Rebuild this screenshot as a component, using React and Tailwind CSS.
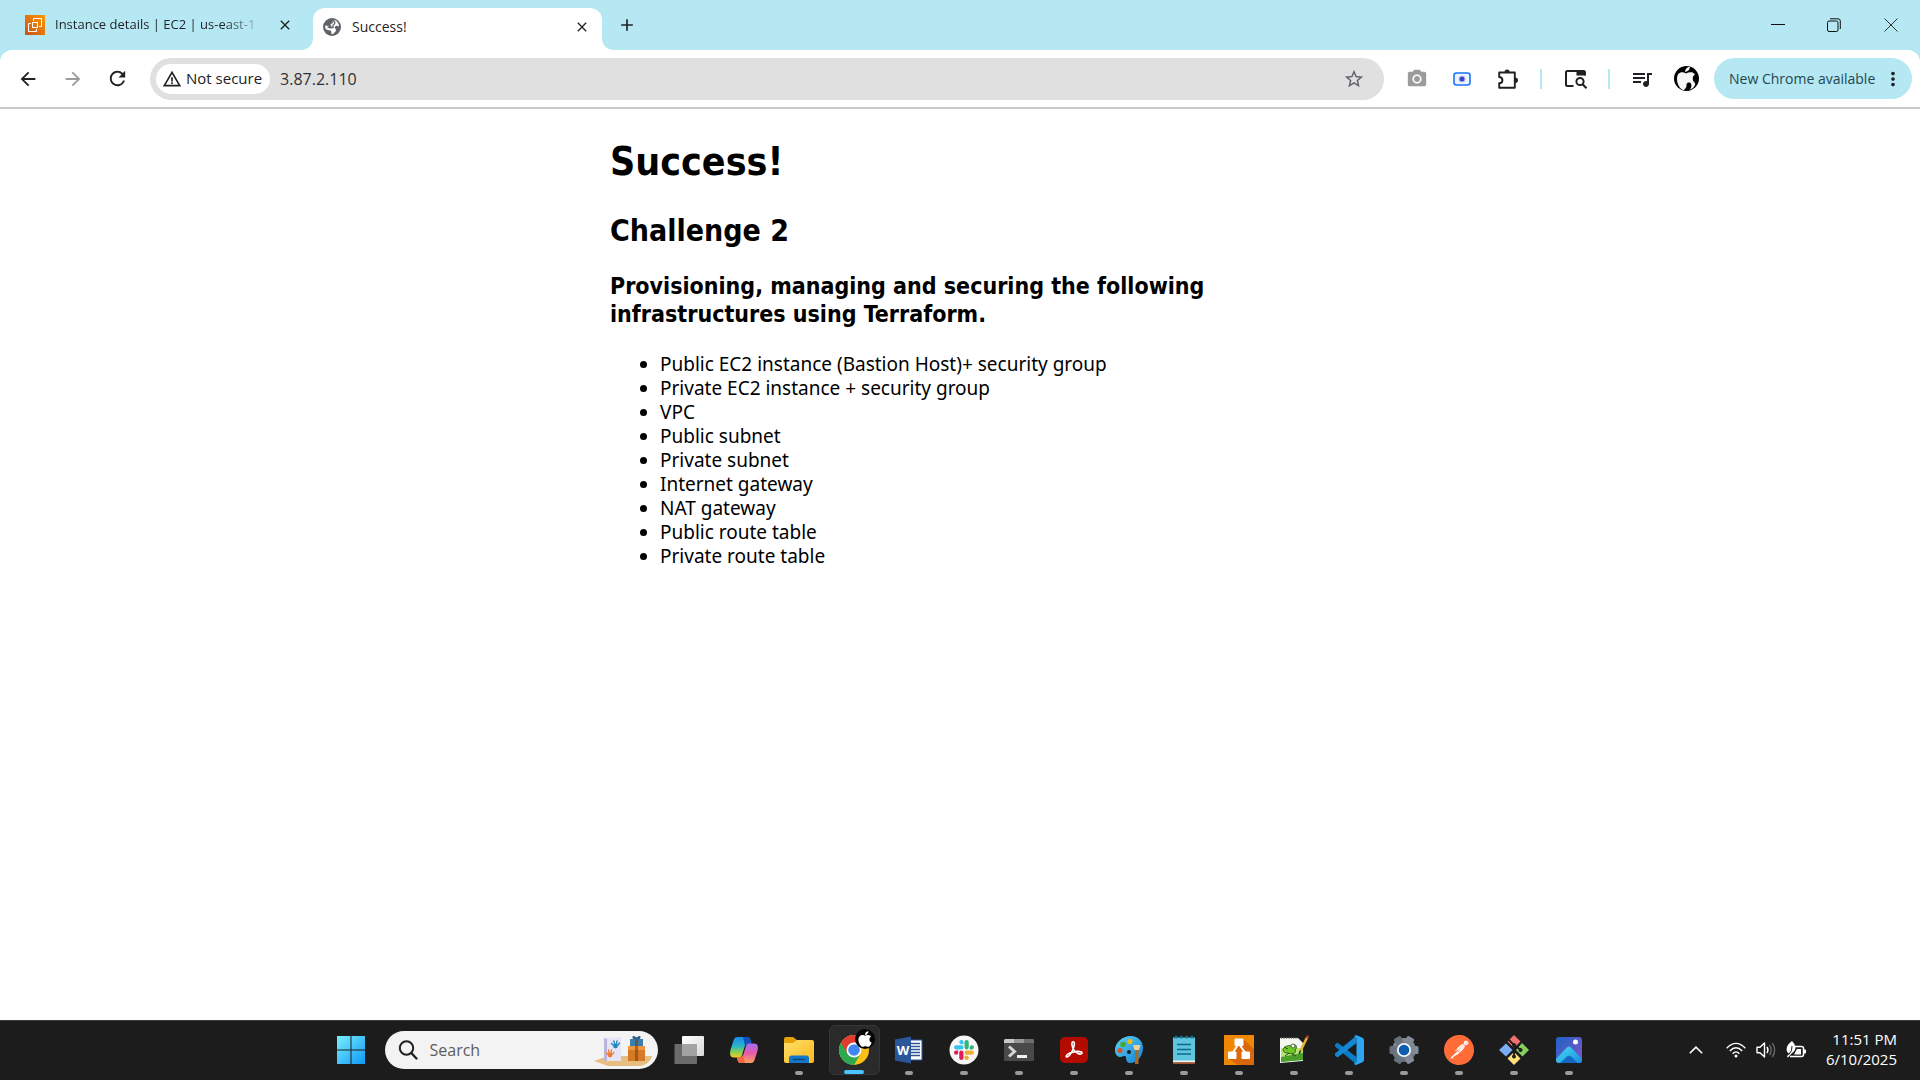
import React from "react";
import { FaApple } from "react-icons/fa";
import { SiPostman } from "react-icons/si";
import {
  MdAdd,
  MdArrowBack,
  MdArrowForward,
  MdClose,
  MdMoreVert,
  MdQueueMusic,
  MdRefresh,
  MdStarBorder,
  MdPhotoCamera,
  MdWarningAmber,
} from "react-icons/md";

const UI_FONT = "font-['Open_Sans','Noto_Sans',sans-serif]";

const resources = [
  "Public EC2 instance (Bastion Host)+ security group",
  "Private EC2 instance + security group",
  "VPC",
  "Public subnet",
  "Private subnet",
  "Internet gateway",
  "NAT gateway",
  "Public route table",
  "Private route table",
];

function Svg({ children, className = "size-[30px]" }) {
  return (
    <svg viewBox="0 0 30 30" className={`${className} overflow-visible`} aria-hidden="true">
      {children}
    </svg>
  );
}

/* ---------- Tab strip ---------- */

function Ec2Icon() {
  return (
    <svg viewBox="0 0 20 20" className="size-5 shrink-0" aria-hidden="true">
      <defs>
        <linearGradient id="ec2" x1="0" y1="1" x2="1" y2="0">
          <stop offset="0" stopColor="#c8511b" />
          <stop offset="1" stopColor="#f90" />
        </linearGradient>
      </defs>
      <rect width="20" height="20" fill="url(#ec2)" />
      <g fill="none" stroke="#fff" strokeWidth="1">
        <rect x="7.5" y="7.5" width="5" height="5" />
        <path d="M8.500 6V3.500H16.500V11.500H14" />
        <path d="M6 8.500H3.500V16.500H11.500V14" />
      </g>
    </svg>
  );
}

function GlobeIcon() {
  return (
    <svg viewBox="0 0 18 18" className="size-[18px] shrink-0" aria-hidden="true">
      <circle cx="9" cy="9" r="9" fill="#5f6368" />
      <path
        d="M2 8C2.500 7 4 7.500 5 8L7 9.500L8.500 9C8.500 7.500 7 7 7.500 6C8.500 5.500 10 5.500 10 4.500C10 3.500 9 3.500 9.500 2.500L11.500 2C14.500 3 16 6 16 8.500C15 8 14 7.500 13 8C11.500 8.500 11.500 10 12.500 11C13.500 11.500 13 13 12 14C11 15.500 9.500 16.500 8.500 16C8 15 9 13.500 7.500 12.500C6 12 3.500 12 2.500 10.500Z"
        fill="#fff"
      />
      <path d="M9.500 2.500C12 3 12.500 5 11 6.500C9.500 7 9.500 8 10.500 9C8.500 10.500 6 9.500 4.500 9" stroke="#5f6368" strokeWidth="1.300" fill="none" />
    </svg>
  );
}

function TabStrip() {
  return (
    <header className="flex h-[50px] items-stretch bg-[#b5e8f3] text-[#1f2326]">
      <div className="flex w-[301px] items-center pl-[25px]">
        <Ec2Icon />
        <span className="ml-[10px] w-[210px] text-[13px] whitespace-nowrap [mask-image:linear-gradient(to_right,black_80%,transparent)]">
          Instance details | EC2 | us-east-1
        </span>
        <button aria-label="Close Instance details tab" className="ml-3">
          <MdClose className="size-4" />
        </button>
      </div>
      <div className="flex items-end pt-2">
        <svg viewBox="0 0 12 12" className="size-3" aria-hidden="true">
          <path d="M12 0V12H0C7 12 12 7 12 0Z" fill="#fff" />
        </svg>
        <div className="flex h-full w-[289px] items-center rounded-t-xl bg-white pr-3 pb-[17px] pl-2.5 pt-3">
          <GlobeIcon />
          <span className="ml-[11px] flex-1 text-sm">Success!</span>
          <button aria-label="Close Success tab">
            <MdClose className="size-4" />
          </button>
        </div>
        <svg viewBox="0 0 12 12" className="size-3" aria-hidden="true">
          <path d="M0 0V12H12C5 12 0 7 0 0Z" fill="#fff" />
        </svg>
      </div>
      <button aria-label="New tab" className="ml-[3px]">
        <MdAdd className="size-5" />
      </button>
      <div className="ml-auto flex">
        <button aria-label="Minimize" className="flex w-14 items-center justify-center">
          <svg viewBox="0 0 14 14" className="size-3.5" aria-hidden="true">
            <path d="M0 6.500H14" stroke="#111" />
          </svg>
        </button>
        <button aria-label="Restore" className="flex w-14 items-center justify-center">
          <svg viewBox="0 0 14 14" className="size-3.5" fill="none" stroke="#111" aria-hidden="true">
            <rect x="0.500" y="3" width="10.500" height="10.500" rx="1.500" />
            <path d="M3 .8H11Q13.300 .8 13.300 3V11" />
          </svg>
        </button>
        <button aria-label="Close window" className="flex w-[58px] items-center justify-center">
          <svg viewBox="0 0 14 14" className="size-3.5" stroke="#333" aria-hidden="true">
            <path d="M.5 .5L13.500 13.500M13.500 .5L.5 13.500" />
          </svg>
        </button>
      </div>
    </header>
  );
}

/* ---------- Toolbar ---------- */

function ScreenshotIcon() {
  return (
    <svg viewBox="0 0 18 14" className="h-3.5 w-[18px]" aria-hidden="true">
      <rect x="1" y="1" width="16" height="12" rx="2.500" fill="#eef5ff" stroke="#1a73f8" strokeWidth="1.600" />
      <circle cx="9" cy="7" r="3.600" fill="#c3cbf7" />
      <circle cx="9" cy="7" r="2.500" fill="#3a46c8" />
    </svg>
  );
}

function PuzzleIcon() {
  return (
    <svg viewBox="0 0 22 22" className="size-[22px]" aria-hidden="true">
      <path
        d="M2.200 4.500H17.800V19.800H2.200V15.300C6.500 15 6.500 9.300 2.200 9Z"
        fill="none"
        stroke="#202124"
        strokeWidth="1.900"
        strokeLinejoin="round"
      />
      <path d="M7.500 4.500a2.600 2.900 0 0 1 5.200 0ZM18 9.500a3 2.800 0 0 1 0 5.600Z" fill="#202124" />
    </svg>
  );
}

function TabSearchIcon() {
  return (
    <svg viewBox="0 0 22 20" className="h-5 w-[22px]" fill="none" stroke="#202124" strokeWidth="2" aria-hidden="true">
      <path d="M8.500 17H2.500Q1 17 1 15.500V3.500Q1 2 2.500 2H18.500Q20 2 20 3.500V6.500" />
      <path d="M11.500 2H20V6.500H11.500Z" fill="#202124" stroke="none" />
      <circle cx="15" cy="12.500" r="3.600" />
      <path d="M17.600 15.200L21.500 19.200" />
    </svg>
  );
}

function Avatar() {
  return (
    <span className="flex size-[25px] items-center justify-center overflow-hidden rounded-full bg-black">
      <svg viewBox="0 0 25 25" className="size-[25px]" aria-hidden="true">
        <path
          d="M12 7.500C8 5 3 6 3 13C3 18 6 23 9 24C11 24.500 11 22 12.500 21C12 18 13 16 15.500 16.500C18 17 18 21 16 23.500C19 23 22 19 21 17C18 15 18 10 21 8.500C19 5.500 15 6 12 7.500Z"
          fill="#f6f6f6"
        />
        <path d="M11 6C11 3 13 1 16 .5C16 3.500 14 5.500 11 6Z" fill="#f6f6f6" />
      </svg>
    </span>
  );
}

function Toolbar() {
  return (
    <div className="bg-[#b5e8f3]">
      <nav
        aria-label="Browser toolbar"
        className="flex h-[59px] items-center rounded-t-xl border-b-2 border-[#c8c8c8] bg-white pr-2 pl-[17px] text-[#202124]"
      >
        <button aria-label="Back">
          <MdArrowBack className="size-[22px]" />
        </button>
        <button aria-label="Forward" className="ml-[23px] text-[#9b9b9b]">
          <MdArrowForward className="size-[22px]" />
        </button>
        <button aria-label="Reload" className="ml-[22px]">
          <MdRefresh className="size-[23px]" />
        </button>
        <div className="ml-[21px] flex h-[42px] flex-1 items-center rounded-full bg-[#e0e0e0] pr-[19px] pl-1.5">
          <button className="flex h-[30px] items-center gap-1 rounded-full bg-white pr-2 pl-1.5 text-[15px] font-medium">
            <MdWarningAmber className="size-5" />
            Not secure
          </button>
          <input
            aria-label="Address"
            defaultValue="3.87.2.110"
            className="ml-2.5 min-w-0 flex-1 bg-transparent text-base text-[#303134] outline-none"
          />
          <button aria-label="Bookmark this page">
            <MdStarBorder className="size-[22px] text-[#5f6368]" />
          </button>
        </div>
        <div className="ml-[22px] flex items-center">
          <button aria-label="Camera extension">
            <MdPhotoCamera className="size-[22px] text-[#9b9b9b]" />
          </button>
          <button aria-label="Screenshot extension" className="ml-[25px]">
            <ScreenshotIcon />
          </button>
          <button aria-label="Extensions" className="ml-[26px]">
            <PuzzleIcon />
          </button>
          <span className="ml-[21px] h-5 w-0.5 bg-[#b5e8f3]" />
          <button aria-label="Search tabs" className="ml-[23px]">
            <TabSearchIcon />
          </button>
          <span className="ml-[21px] h-5 w-0.5 bg-[#b5e8f3]" />
          <button aria-label="Media controls" className="ml-5">
            <MdQueueMusic className="size-6" />
          </button>
          <button aria-label="Profile" className="ml-5">
            <Avatar />
          </button>
          <button className="ml-[15px] flex h-[41px] w-[198px] items-center justify-between rounded-full bg-[#b5e8f3] pr-2 pl-[15px] text-sm whitespace-nowrap text-[#24474f]">
            New Chrome available
            <MdMoreVert className="size-[22px] text-[#202124]" />
          </button>
        </div>
      </nav>
    </div>
  );
}

/* ---------- Page ---------- */

function Page() {
  return (
    <main className="flex-1 bg-white font-['DejaVu_Sans_Condensed','DejaVu_Sans',sans-serif] text-black">
      <article className="mx-auto max-w-[700px] pt-[29px]">
        <h1 className="text-[39px] leading-[48px] font-bold">Success!</h1>
        <h2 className="mt-[27px] text-3xl leading-9 font-bold">Challenge 2</h2>
        <h3 className="mt-[23px] text-[23px] leading-7 font-bold">
          Provisioning, managing and securing the following infrastructures using Terraform.
        </h3>
        <ul className="mt-6 list-disc pl-[50px] font-['Noto_Sans',sans-serif] text-[19px] leading-6">
          {resources.map((r) => (
            <li key={r}>{r}</li>
          ))}
        </ul>
      </article>
    </main>
  );
}

/* ---------- Taskbar icons ---------- */

function StartIcon() {
  return (
    <Svg>
      <defs>
        <linearGradient id="start" x1="0" y1="0" x2="30" y2="30" gradientUnits="userSpaceOnUse">
          <stop offset="0" stopColor="#7df3ff" />
          <stop offset="1" stopColor="#0a94f5" />
        </linearGradient>
      </defs>
      <path d="M1 1H14.500V14.500H1ZM15.500 1H29V14.500H15.500ZM1 15.500H14.500V29H1ZM15.500 15.500H29V29H15.500Z" fill="url(#start)" />
    </Svg>
  );
}

function TaskViewIcon() {
  return (
    <Svg>
      <defs>
        <linearGradient id="tv" x1="0" y1="0" x2="1" y2="1">
          <stop offset="0" stopColor="#fff" />
          <stop offset="1" stopColor="#d8d8d8" />
        </linearGradient>
      </defs>
      <rect x="8" y="1" width="22" height="20" rx="1" fill="url(#tv)" />
      <path d="M.5 10Q.5 9 1.500 9H23V28Q23 29 22 29H1.500Q.5 29 .5 28Z" fill="#6b6b6b" />
      <path d="M8 9H23V21H8Z" fill="#a3a3a3" />
    </Svg>
  );
}

function CopilotIcon() {
  return (
    <Svg>
      <defs>
        <linearGradient id="cp1" x1="0" y1="0" x2="0" y2="1">
          <stop offset="0" stopColor="#1a8af0" />
          <stop offset=".45" stopColor="#29b6c8" />
          <stop offset=".75" stopColor="#8fd04a" />
          <stop offset="1" stopColor="#f3cd25" />
        </linearGradient>
        <linearGradient id="cp2" x1="0" y1="0" x2="0" y2="1">
          <stop offset="0" stopColor="#a66bf2" />
          <stop offset=".5" stopColor="#e85aa8" />
          <stop offset="1" stopColor="#ffa35c" />
        </linearGradient>
      </defs>
      <path d="M8 2H18C20 2 21 3 21.500 5L22.500 9H19C17 9 16 10 15.500 12L13 20C12.500 21.500 11.500 22.500 10 22.500H5C1 22.500 .5 19 1.500 15L4 7C5 3.500 6 2 8 2Z" fill="url(#cp1)" />
      <path d="M14 2H18C20 2 21 3 21.500 5L22.500 9H19C17.500 9 16.500 9.500 16 11Z" fill="#1550bf" />
      <path d="M22 28H12C10 28 9 27 8.500 25L7.700 22H11C13 22 14 21 14.500 19L17 11C17.500 9.500 18.500 8.500 20 8.500H25C29 8.500 29.500 12 28.500 16L26 23.500C25 27 24 28 22 28Z" fill="url(#cp2)" />
      <path d="M16 28H12C10 28 9 27 8.500 25L7.700 22H11C12.500 22 13.500 21.500 14 20Z" fill="#f06a45" />
    </Svg>
  );
}

function ExplorerIcon() {
  return (
    <Svg>
      <defs>
        <linearGradient id="fo" x1="0" y1="0" x2="1" y2="1">
          <stop offset="0" stopColor="#ffdf6b" />
          <stop offset="1" stopColor="#fdb91a" />
        </linearGradient>
      </defs>
      <path d="M0 4Q0 2 2 2H9L13 5H20V12H0Z" fill="#e5a10b" />
      <path d="M0 8H9L13 5H28Q30 5 30 7V26Q30 28 28 28H2Q0 28 0 26Z" fill="url(#fo)" />
      <path d="M5 28V23Q5 20.500 7.500 20.500H22.500Q25 20.500 25 23V28Z" fill="#1477c9" />
      <path d="M9 24.500H21" stroke="#0a4678" strokeWidth="1.500" />
    </Svg>
  );
}

function ChromeIcon() {
  return (
    <Svg>
      <circle cx="15" cy="15" r="15" fill="#fbbf16" />
      <path d="M15 15L2 7.500A15 15 0 0 0 15 30L21.500 18.800Z" fill="#2da94f" />
      <path d="M15 15V7.500H28A15 15 0 0 0 2 7.500L8.500 18.800Z" fill="#e33b2e" />
      <circle cx="15" cy="15" r="7.500" fill="#fff" />
      <circle cx="15" cy="15" r="5.800" fill="#4285f4" />
      <circle cx="26" cy="4" r="10" fill="#050505" />
      <FaApple x="17" y="-5" size={18} color="#fff" />
    </Svg>
  );
}

function WordIcon() {
  return (
    <Svg>
      <rect x="14" y="5" width="14" height="20" fill="#fff" stroke="#2b579a" />
      <path d="M17 8.500H26M17 11.500H26M17 14.500H26M17 17.500H26M17 20.500H26" stroke="#2b579a" strokeWidth="1.300" />
      <path d="M1 4.500L17 1.500V28.500L1 25.500Z" fill="#2b579a" />
      <text x="9" y="20" fill="#fff" fontSize="13" fontWeight="700" textAnchor="middle">
        W
      </text>
    </Svg>
  );
}

function SlackIcon() {
  return (
    <Svg>
      <circle cx="15" cy="15" r="14.500" fill="#f7f5f5" />
      <g transform="translate(5 5) scale(.833)">
        <path fill="#e01e5a" d="M5.042 15.165a2.528 2.528 0 0 1-2.520 2.523A2.528 2.528 0 0 1 0 15.165a2.527 2.527 0 0 1 2.522-2.520h2.520zM6.313 15.165a2.527 2.527 0 0 1 2.521-2.520 2.527 2.527 0 0 1 2.521 2.520v6.313A2.528 2.528 0 0 1 8.834 24a2.528 2.528 0 0 1-2.521-2.522z" />
        <path fill="#36c5f0" d="M8.834 5.042a2.528 2.528 0 0 1-2.521-2.520A2.528 2.528 0 0 1 8.834 0a2.528 2.528 0 0 1 2.521 2.522v2.520zM8.834 6.313a2.528 2.528 0 0 1 2.521 2.521 2.528 2.528 0 0 1-2.521 2.521H2.522A2.528 2.528 0 0 1 0 8.834a2.528 2.528 0 0 1 2.522-2.521z" />
        <path fill="#2eb67d" d="M18.956 8.834a2.528 2.528 0 0 1 2.522-2.521A2.528 2.528 0 0 1 24 8.834a2.528 2.528 0 0 1-2.522 2.521h-2.522zM17.688 8.834a2.528 2.528 0 0 1-2.523 2.521 2.527 2.527 0 0 1-2.520-2.521V2.522A2.527 2.527 0 0 1 15.165 0a2.528 2.528 0 0 1 2.523 2.522z" />
        <path fill="#ecb22e" d="M15.165 18.956a2.528 2.528 0 0 1 2.523 2.522A2.528 2.528 0 0 1 15.165 24a2.527 2.527 0 0 1-2.520-2.522v-2.522zM15.165 17.688a2.527 2.527 0 0 1-2.520-2.523 2.526 2.526 0 0 1 2.520-2.520h6.313A2.527 2.527 0 0 1 24 15.165a2.528 2.528 0 0 1-2.522 2.523z" />
      </g>
    </Svg>
  );
}

function TerminalIcon() {
  return (
    <Svg>
      <rect x="0" y="4" width="30" height="22" rx="1.500" fill="#48494b" />
      <path d="M0 8V5.500Q0 4 1.500 4H10V8Z" fill="#c9c9c9" />
      <path d="M10 4H20V8H10Z" fill="#989898" />
      <path d="M20 4H28.500Q30 4 30 5.500V8H20Z" fill="#6e6e6e" />
      <path d="M5 11.500L10.500 16.500L5 21.500" fill="none" stroke="#d6d6d6" strokeWidth="3" />
      <path d="M13 21.500H23" stroke="#f2f2f2" strokeWidth="3" />
    </Svg>
  );
}

function AcrobatIcon() {
  return (
    <Svg>
      <rect x="1" y="2" width="28" height="26" rx="5" fill="#b30b00" />
      <path
        d="M13.500 7C15.500 6 16 9 14.500 13C13 17 10 21.500 8 22C6.500 22 7 19.500 11 18C15 16.500 20 16 22.500 17C24 18 22 20 19 18.500C16 17 13.500 13.500 13 10C12.800 8.500 12.900 7.400 13.500 7Z"
        fill="none"
        stroke="#fff"
        strokeWidth="1.600"
      />
    </Svg>
  );
}

function PaintIcon() {
  return (
    <Svg>
      <defs>
        <linearGradient id="pt" x1="0" y1="0" x2="1" y2="1">
          <stop offset="0" stopColor="#5ed4f7" />
          <stop offset="1" stopColor="#1080d0" />
        </linearGradient>
      </defs>
      <path d="M17 1C8 1 1 8 1 15C1 19 3 22 6 22C8 22 9 20.500 11 21C13 22 11 25 14 27.500C19 30 29 24 29 13C29 6 24 1 17 1Z" fill="url(#pt)" />
      <circle cx="9" cy="9.500" r="2.800" fill="#4ba82e" />
      <circle cx="16" cy="6.500" r="2.600" fill="#f4b813" />
      <circle cx="6" cy="15.500" r="2.600" fill="#d8542a" />
      <circle cx="15" cy="17" r="2" fill="#1c1c1c" />
      <path d="M21 14H24.500V29H21Z" fill="#a8682a" />
      <path d="M19 10H26.500L25 15H20.500Z" fill="#f0cf9a" />
    </Svg>
  );
}

function NotepadIcon() {
  return (
    <Svg>
      <path d="M4 2.500H26V27H4Z" fill="#5fc4de" />
      <path d="M4 25.500H26V27.500H4Z" fill="#f5f5f5" />
      <path d="M4 27.500H26V29H4Z" fill="#a4532b" />
      <path d="M8 9.500H22M8 14.500H22M8 19H22" stroke="#0d6a88" strokeWidth="1.700" />
      <g fill="#12718d">
        <circle cx="7" cy="2" r="1.600" />
        <circle cx="12.300" cy="2" r="1.600" />
        <circle cx="17.600" cy="2" r="1.600" />
        <circle cx="23" cy="2" r="1.600" />
      </g>
    </Svg>
  );
}

function DrawioIcon() {
  return (
    <Svg>
      <path d="M0 0H30V30H0Z" fill="#f08705" />
      <path d="M19 4L30 14V30H14L4 23.500L14 11Z" fill="#d9680d" />
      <path d="M14.500 9L8 19M15 9L22 19" stroke="#fff" strokeWidth="2" />
      <rect x="10.500" y="3.500" width="9" height="7.500" rx="1" fill="#fff" />
      <rect x="4" y="16.500" width="8.500" height="7.500" rx="1" fill="#fff" />
      <rect x="17.500" y="16.500" width="8.500" height="7.500" rx="1" fill="#fff" />
    </Svg>
  );
}

function NotepadPlusIcon() {
  return (
    <Svg>
      <path d="M1 3H19L24 8V26L1 28Z" fill="#f3f5ee" />
      <path d="M2 13H24V25L2 27Z" fill="#b5e374" />
      <path d="M2 22L24 18V25L2 27Z" fill="#4a9e2a" />
      <path d="M2 3H19" stroke="#666" strokeWidth="1.500" strokeDasharray="1.200 1.200" />
      <path d="M4 15C5 11 9 10 13 11C17 7 19 13 16 15C18 18 13 20 9 18C6 18 4 17 4 15Z" fill="#70c72c" stroke="#254d12" strokeWidth=".8" />
      <circle cx="14" cy="11" r="2" fill="#fff" stroke="#254d12" strokeWidth=".8" />
      <path d="M6 21L10 18M13 19L17 21M5 12L9 14" stroke="#254d12" strokeWidth="1" />
      <path d="M21 17L28.500 1.500" stroke="#e8b02b" strokeWidth="2.600" />
      <path d="M27.700 3L29 .5" stroke="#a63a2a" strokeWidth="2.600" />
      <path d="M20.200 19L21.500 15.500" stroke="#333" strokeWidth="1.500" />
    </Svg>
  );
}

function VsCodeIcon() {
  return (
    <Svg>
      <path d="M1 9.500L3.500 7.500L22.500 22V29.500L1 11.500Z" fill="#0a7bc4" />
      <path d="M1 20.500L3.500 22.500L22.500 8V.5L1 18.500Z" fill="#1287d4" />
      <path d="M22 0L28.500 2.800Q30 3.500 30 5V25Q30 26.500 28.500 27.200L22 30C20.800 30 20 29 20.500 28L22.500 27V3L20.500 2Q20.500 .5 22 0Z" fill="#2aa6f2" />
    </Svg>
  );
}

function SettingsIcon() {
  return (
    <Svg>
      <defs>
        <linearGradient id="gear" x1="0" y1="0" x2="0" y2="1">
          <stop offset="0" stopColor="#87909a" />
          <stop offset="1" stopColor="#646e78" />
        </linearGradient>
      </defs>
      <g fill="url(#gear)">
        <circle cx="15" cy="15" r="12" />
        <rect x="11" y="0.500" width="8" height="29" rx="1.500" transform="rotate(30 15 15)" />
        <rect x="11" y="0.500" width="8" height="29" rx="1.500" transform="rotate(90 15 15)" />
        <rect x="11" y="0.500" width="8" height="29" rx="1.500" transform="rotate(150 15 15)" />
      </g>
      <circle cx="15" cy="15" r="6.200" fill="#0d5cb0" stroke="#f1f3f5" strokeWidth="1.800" />
    </Svg>
  );
}

function PostmanIcon() {
  return (
    <Svg>
      <circle cx="15" cy="15" r="14" fill="#fff" />
      <SiPostman size={30} color="#ff6c37" />
    </Svg>
  );
}

function GitIcon() {
  return (
    <Svg>
      <path d="M15 0L21.500 6.500L15 13L8.500 6.500Z" fill="#f0716f" />
      <path d="M23 8L30 15L23.500 21.500L17 15Z" fill="#86cf5c" />
      <path d="M7 8.500L13.500 15L7 21.500L0 15Z" fill="#7caef5" />
      <path d="M15 17L21.500 23.500L15 30L8.500 23.500Z" fill="#ffe07a" />
      <path d="M9.500 4.500L15 10V22M15 10L22 15" fill="none" stroke="#1c1c1c" strokeWidth="1.800" />
      <circle cx="15" cy="10" r="2" fill="#1c1c1c" />
      <circle cx="21.500" cy="15" r="2" fill="#1c1c1c" />
      <circle cx="15" cy="21.500" r="2" fill="#1c1c1c" />
    </Svg>
  );
}

function PhotosIcon() {
  return (
    <Svg>
      <defs>
        <linearGradient id="ph1" x1="0" y1="0" x2="1" y2="1">
          <stop offset="0" stopColor="#1c63c8" />
          <stop offset="1" stopColor="#8654c4" />
        </linearGradient>
        <linearGradient id="ph2" x1="0" y1="0" x2="1" y2="1">
          <stop offset="0" stopColor="#46e0f5" />
          <stop offset="1" stopColor="#1583dc" />
        </linearGradient>
        <clipPath id="phc">
          <rect x="2" y="2" width="26" height="26" rx="3" />
        </clipPath>
      </defs>
      <g clipPath="url(#phc)">
        <rect x="2" y="2" width="26" height="26" fill="url(#ph1)" />
        <path d="M2 24L13 12.500Q15 10.500 17 12.500L30 26V30H2Z" fill="url(#ph2)" />
        <path d="M4 30L13 21.500Q15 20 17 21.500L26 30Z" fill="#1668c0" />
      </g>
      <circle cx="21.500" cy="7" r="2.500" fill="#fff" />
    </Svg>
  );
}

function SearchArt() {
  return (
    <svg viewBox="0 0 60 36" className="h-9 w-[60px]" aria-hidden="true">
      <path d="M0 29L14 24H58C57 29 52 33 46 34H14Z" fill="#e8bd80" />
      <path d="M10 6L27 5V29H10Z" fill="#e4e5f5" />
      <path d="M10 6L13 7V29H10Z" fill="#b9b6dd" />
      <g fill="none" strokeLinecap="round">
        <circle cx="21.500" cy="14" r="2.400" fill="#2585b8" />
        <path d="M19 13L17.500 11.500M20.500 11.500L19.800 9M22.500 11.500L23 9M24 13L25.500 11" stroke="#2585b8" strokeWidth="1.300" />
        <circle cx="16" cy="23" r="2.400" fill="#ee7a35" />
        <path d="M13.500 22L12.200 20.500M15 20.500L14.500 18M17 20.500L17.500 18M18.500 22L20 20.500" stroke="#ee7a35" strokeWidth="1.300" />
      </g>
      <path d="M34 15H51V29H34Z" fill="#d67a27" />
      <path d="M34 14H51V18H34Z" fill="#f0963c" />
      <path d="M36 7H49V14H36Z" fill="#3c7fae" />
      <path d="M39 7Q37 2 42.500 5.500Q48 2 46 7Z" fill="#2a5f8c" />
      <path d="M41 7H44V29H41Z" fill="#78430f" opacity=".6" />
    </svg>
  );
}

const apps = [
  { name: "Task view", Icon: TaskViewIcon },
  { name: "Copilot", Icon: CopilotIcon },
  { name: "File Explorer", Icon: ExplorerIcon, running: true },
  { name: "Chrome", Icon: ChromeIcon, active: true },
  { name: "Word", Icon: WordIcon, running: true },
  { name: "Slack", Icon: SlackIcon, running: true },
  { name: "Terminal", Icon: TerminalIcon, running: true },
  { name: "Acrobat", Icon: AcrobatIcon, running: true },
  { name: "Paint", Icon: PaintIcon, running: true },
  { name: "Notepad", Icon: NotepadIcon, running: true },
  { name: "draw.io", Icon: DrawioIcon, running: true },
  { name: "Notepad++", Icon: NotepadPlusIcon, running: true },
  { name: "Visual Studio Code", Icon: VsCodeIcon, running: true },
  { name: "Settings", Icon: SettingsIcon, running: true },
  { name: "Postman", Icon: PostmanIcon, running: true },
  { name: "Git Bash", Icon: GitIcon, running: true },
  { name: "Photos", Icon: PhotosIcon, running: true },
];

function AppButton({ name, Icon, running, active }) {
  return (
    <button
      aria-label={name}
      className={`relative mx-0.5 flex h-[50px] w-[51px] items-center justify-center rounded-md ${
        active ? "border border-[#363636] bg-[#2a2a2a]" : ""
      }`}
    >
      <Icon />
      {running && <span className="absolute bottom-0 h-1 w-2 rounded-full bg-[#9a9a9a]" />}
      {active && <span className="absolute bottom-0 h-1 w-5 rounded-full bg-[#4cc2ff]" />}
    </button>
  );
}

function Tray() {
  return (
    <div className="flex items-center justify-end pr-[23px] text-white">
      <button aria-label="Show hidden icons">
        <svg viewBox="0 0 14 8" className="h-2 w-3.5" fill="none" stroke="#fff" strokeWidth="1.600" aria-hidden="true">
          <path d="M.8 7.200L7 1.200L13.200 7.200" />
        </svg>
      </button>
      <button aria-label="Network, volume and battery" className="ml-[23px] flex items-center gap-2.5">
        <svg viewBox="0 0 20 16" className="h-4 w-5" fill="none" stroke="#fff" strokeWidth="1.400" aria-hidden="true">
          <path d="M.7 6.200Q10-3.500 19.300 6.200M3.800 9Q10 2.500 16.200 9M6.600 11.700Q10 8 13.400 11.700" />
          <circle cx="10" cy="14" r="1.500" fill="#fff" stroke="none" />
        </svg>
        <svg viewBox="0 0 20 18" className="h-[18px] w-5" fill="none" stroke="#fff" strokeWidth="1.400" aria-hidden="true">
          <path d="M1 6.200H4L8.500 2V16L4 11.800H1Z" strokeLinejoin="round" />
          <path d="M11 6Q13 9 11 12" />
          <path d="M13.500 4Q17 9 13.500 14M16.300 2Q21 9 16.300 16" stroke="#666" />
        </svg>
        <svg viewBox="0 0 20 18" className="h-[18px] w-5" aria-hidden="true">
          <path d="M9 5.500H15.500Q17.500 5.500 17.500 7.500V13.500Q17.500 15.500 15.500 15.500H4" fill="none" stroke="#fff" strokeWidth="1.500" />
          <path d="M18 8.500H19.200Q20 8.500 20 9.300V11.700Q20 12.500 19.200 12.500H18Z" fill="#fff" />
          <path d="M11 8H15V13.500H8Z" fill="#fff" />
          <path d="M6 0C10 4 11 9 6 12L2 16.500L1 15.500L3 12.500C-1 10 0 4 6 0Z" fill="#fff" />
          <path d="M6 5L5.500 9.500L2.500 14" stroke="#1c1c1c" fill="none" />
        </svg>
      </button>
      <button className="ml-5 pb-0.5 text-right text-[15px] leading-5">
        11:51 PM
        <br />
        6/10/2025
      </button>
    </div>
  );
}

function Taskbar() {
  return (
    <footer className="grid h-[60px] grid-cols-[1fr_auto_1fr] items-center border-t border-[#3a3a3a] bg-[#1c1c1c] pb-0.5">
      <div />
      <div className="flex items-center">
        <button aria-label="Start" className="flex w-[55px] justify-center">
          <StartIcon />
        </button>
        <label className="mr-1 ml-1.5 flex h-[38px] w-[273px] items-center rounded-full bg-[#f3f3f3] pr-1 pl-[13px]">
          <svg viewBox="0 0 20 20" className="size-5 shrink-0" fill="none" stroke="#222" strokeWidth="2" aria-hidden="true">
            <circle cx="8.500" cy="8" r="6.700" />
            <path d="M13.300 13L18.500 18.500" strokeWidth="2.400" strokeLinecap="round" />
          </svg>
          <input
            aria-label="Search"
            placeholder="Search"
            className="ml-3 min-w-0 flex-1 bg-transparent text-base outline-none placeholder:text-[#5c5c5c]"
          />
          <SearchArt />
        </label>
        {apps.map((app) => (
          <AppButton key={app.name} {...app} />
        ))}
      </div>
      <Tray />
    </footer>
  );
}

export default function App() {
  return (
    <div className={`flex min-h-screen flex-col ${UI_FONT}`}>
      <TabStrip />
      <Toolbar />
      <Page />
      <Taskbar />
    </div>
  );
}
